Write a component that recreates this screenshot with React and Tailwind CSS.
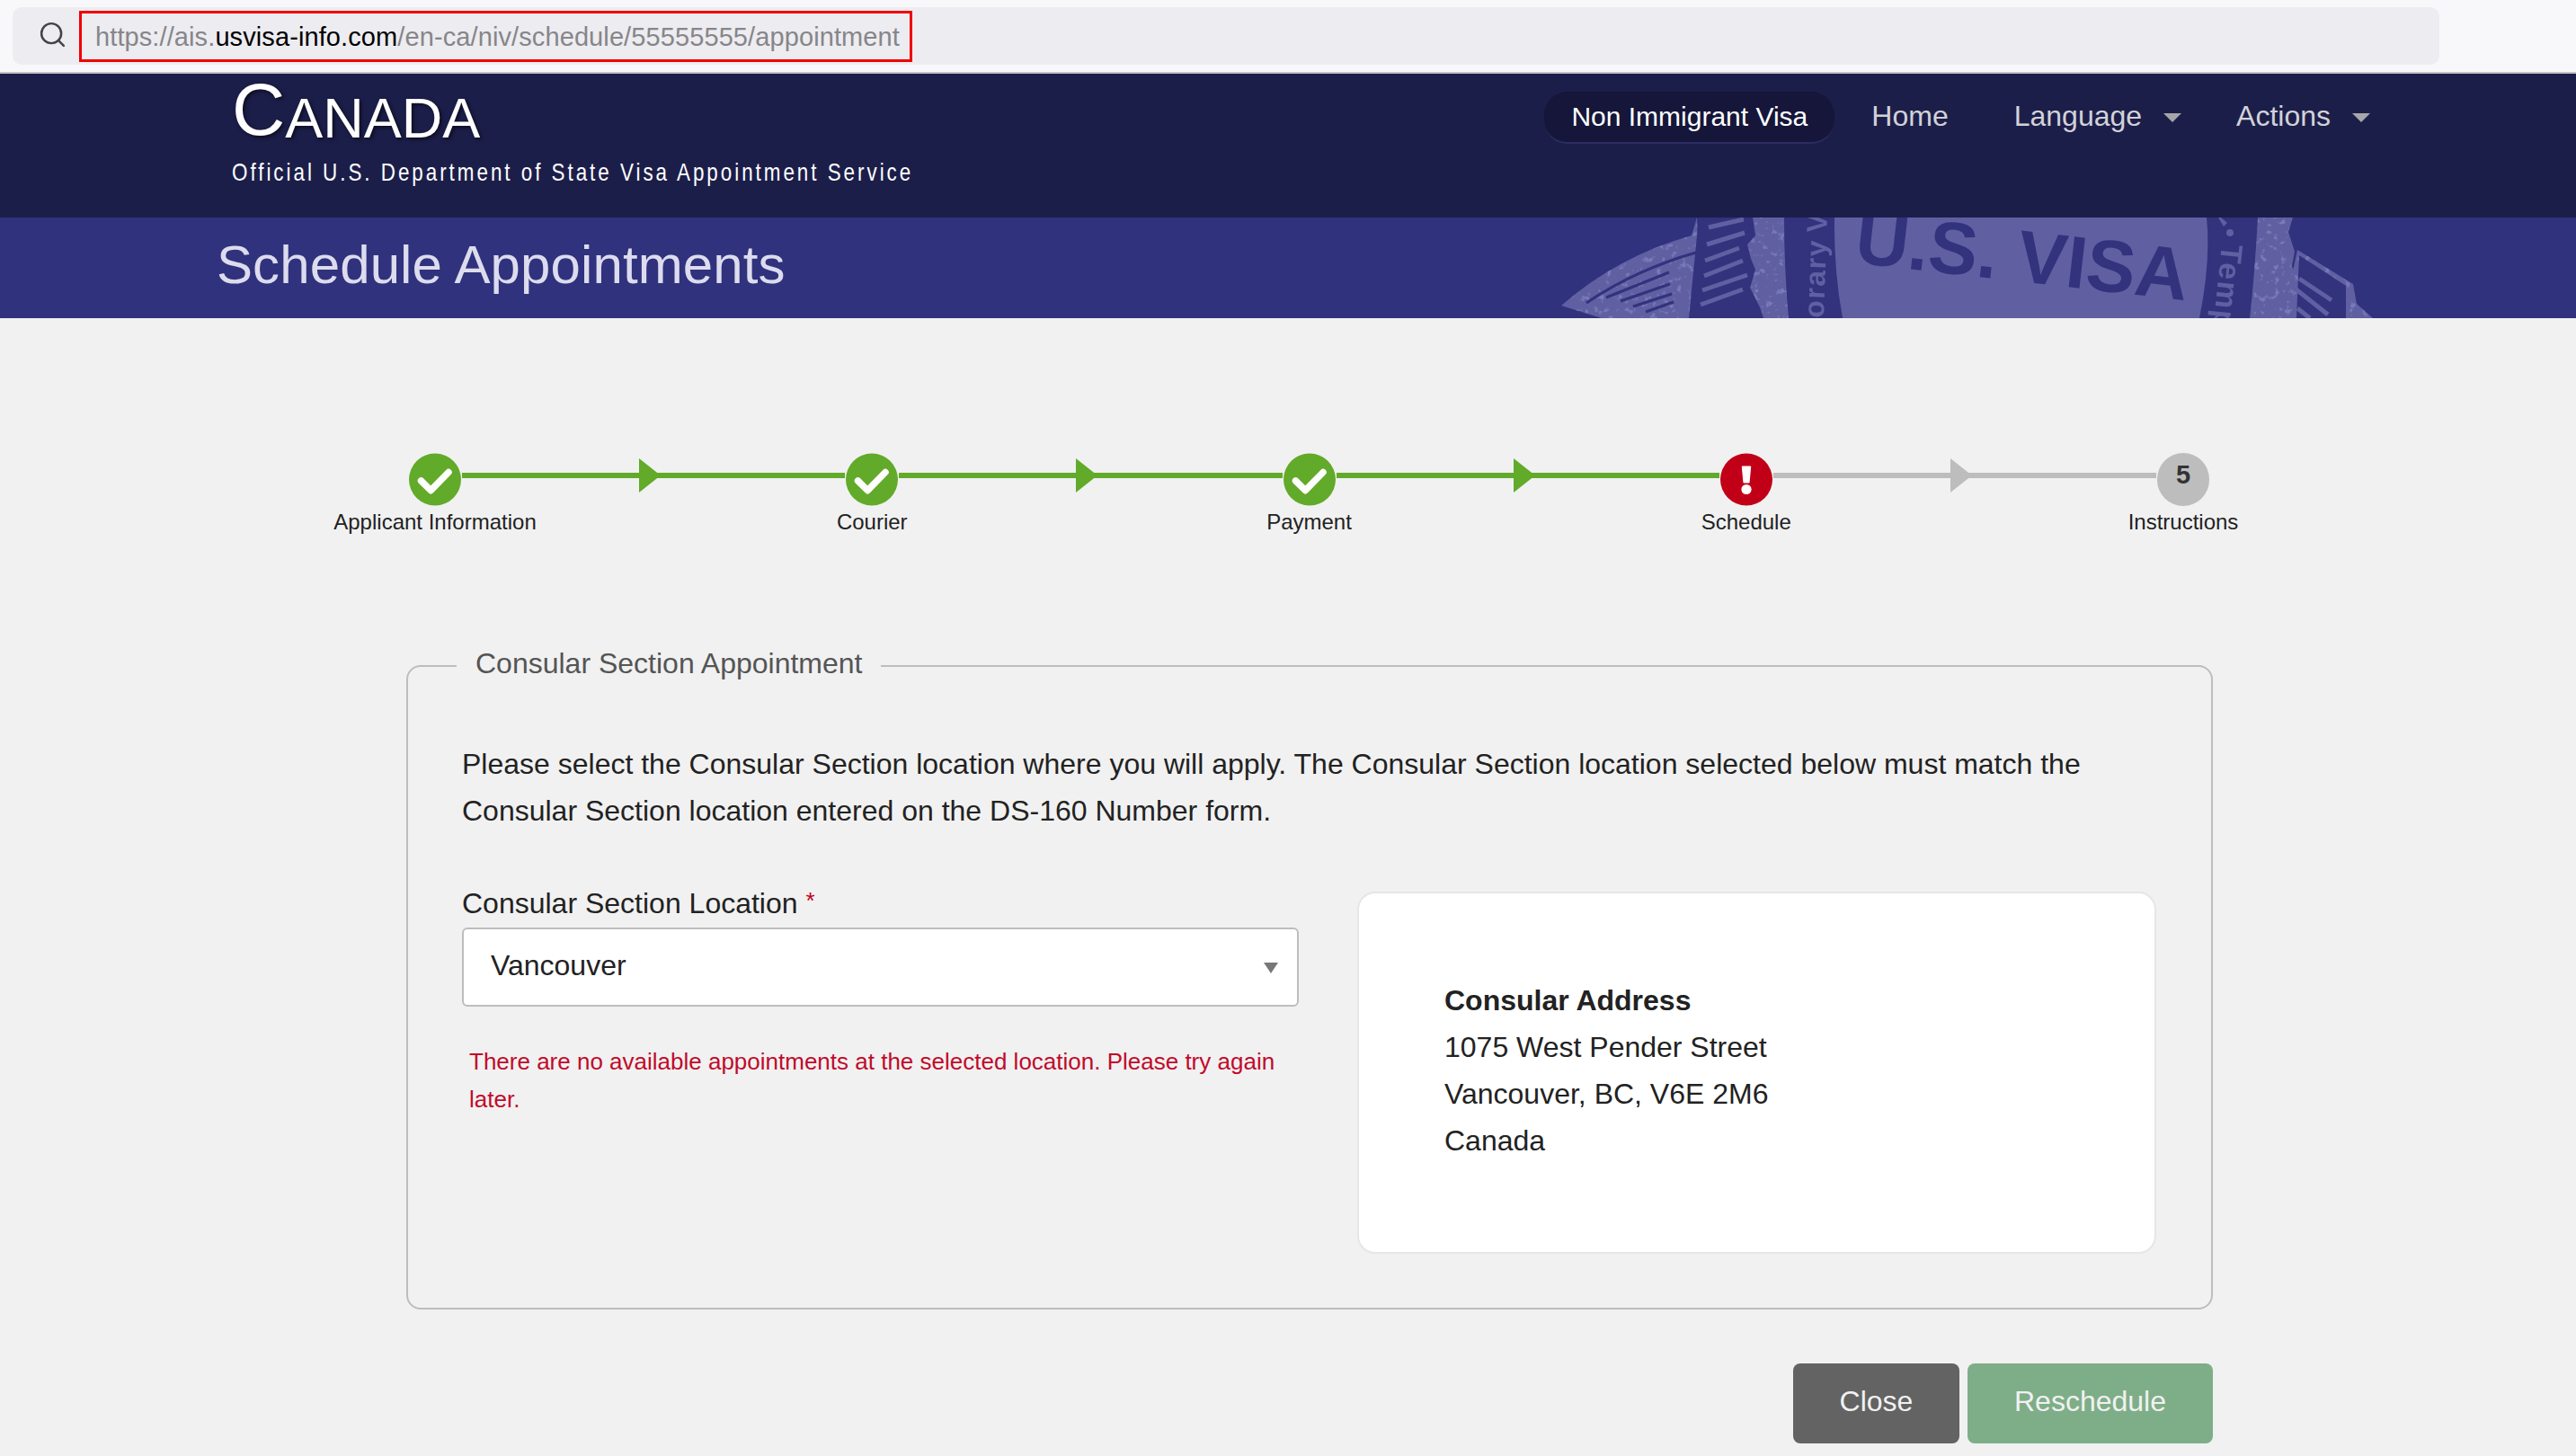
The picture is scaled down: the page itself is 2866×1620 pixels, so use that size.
import { Search } from 'lucide-react'

const steps = [
  { label: 'Applicant Information', state: 'done' },
  { label: 'Courier', state: 'done' },
  { label: 'Payment', state: 'done' },
  { label: 'Schedule', state: 'error' },
  { label: 'Instructions', state: 'todo', num: 5 },
]

function StepCircle({ state, num }) {
  if (state === 'done') {
    return (
      <svg width="58" height="59" viewBox="0 0 58 59" className="block">
        <circle cx="29" cy="29.5" r="29" fill="#62aa29" />
        <path d="M13.5 31 24.3 41.7 44 21.5" fill="none" stroke="#fff" strokeWidth="7.5" strokeLinejoin="round" strokeLinecap="round" />
      </svg>
    )
  }
  if (state === 'error') {
    return (
      <svg width="58" height="59" viewBox="0 0 58 59" className="block">
        <circle cx="29" cy="29.5" r="29" fill="#c10018" />
        <path d="M23.8 15.5a1 1 0 0 1 1-1h8.4a1 1 0 0 1 1 1l-1.6 17a1 1 0 0 1-1 1h-5.2a1 1 0 0 1-1-1z" fill="#fff" />
        <circle cx="29" cy="40.5" r="5.6" fill="#fff" />
      </svg>
    )
  }
  return (
    <div className="w-[58px] h-[59px] rounded-full bg-[#bdbdbd] flex justify-center pt-[7px] text-[29px] leading-[34px] font-bold text-[#333]">
      {num}
    </div>
  )
}

function Connector({ color }) {
  return (
    <div className={`relative flex-1 h-[6px] mt-[22px] mx-px ${color === 'green' ? 'bg-[#62aa29]' : 'bg-[#bdbdbd]'}`}>
      <div
        className={`absolute left-[197px] top-[-16px] w-0 h-0 border-y-[19.5px] border-y-transparent border-l-[24px] ${color === 'green' ? 'border-l-[#62aa29]' : 'border-l-[#bdbdbd]'}`}
      />
    </div>
  )
}

// the faded visa stamp behind the page title
function Seal() {
  const light = '#5e5fa2'
  const dark = '#30327d'
  return (
    <svg className="absolute left-[1720px] top-0" width="960" height="112" viewBox="1720 242 960 112">
      <defs>
        <filter id="mottle" x="0" y="0" width="100%" height="100%">
          <feTurbulence type="fractalNoise" baseFrequency="0.14" numOctaves="3" seed="4" result="n" />
          <feColorMatrix in="n" type="matrix" values="0 0 0 0 0.19  0 0 0 0 0.2  0 0 0 0 0.49  0 0 0 -6 2.5" />
          <feComposite in2="SourceGraphic" operator="in" result="specks" />
          <feMerge>
            <feMergeNode in="SourceGraphic" />
            <feMergeNode in="specks" />
          </feMerge>
        </filter>
        <filter id="soft"><feGaussianBlur stdDeviation="0.5" /></filter>
      </defs>
      <g filter="url(#soft)">
        {/* left fan */}
        <path d="M1737 340 Q1800 285 1882 262 L1888 242 L1892 354 L1782 354 Z" fill={light} filter="url(#mottle)" />
        <path d="M1765 337 Q1820 300 1887 281" fill="none" stroke={dark} strokeWidth="3" />
        <path d="M1787 331 1857 303M1803 335 1858 316M1817 341 1860 327M1831 347 1862 336" stroke={dark} strokeWidth="3" />
        {/* right fan */}
        <path d="M2556 278 L2618 316 L2622 338 L2640 354 L2540 354 Z" fill={light} filter="url(#mottle)" />
        <path d="M2558 284 L2610 318 L2610 354 L2555 354 Z" fill={dark} />
        <path d="M2558 310 2594 334M2552 320 2590 350M2556 343 2570 354" stroke={light} strokeWidth="5" />
        {/* dark band under the scalloped edge */}
        <path d="M1890 242 L1950 242 L1953 262 L1944 272 L1948 288 L1953 300 L1947 320 L1958 342 L1962 354 L1879 354 Z" fill={dark} />
        <path d="M1901 253 1940 244M1899 272 1941 259M1897 290 1935 276M1896 307 1939 290M1894 323 1944 306M1892 339 1939 322" stroke={light} strokeWidth="5" />
        {/* mottled disc */}
        <path
          d="M1950 242 L2551 242 L2546 258 L2553 280 L2550 296 L2556 310 L2548 326 L2552 340 L2548 354 L1962 354 L1958 342 L1947 320 L1953 300 L1948 288 L1944 272 L1953 262 Z"
          fill={light}
          filter="url(#mottle)"
        />
        {/* ring */}
        <path d="M1985 242 L2512 242 Q2508 310 2503 354 L1990 354 Q1985 300 1985 242 Z" fill={dark} />
        <path d="M2041 242 L2455 242 Q2460 290 2447 354 L2050 354 Q2040 300 2041 242 Z" fill={light} />
        <text transform="translate(2029 354) rotate(-88)" fontFamily="Liberation Sans, sans-serif" fontWeight="700" fontSize="32" letterSpacing="1.5" wordSpacing="-3" fill={light}>orary V</text>
        <text transform="translate(2472 271) rotate(96)" fontFamily="Liberation Sans, sans-serif" fontWeight="700" fontSize="34" letterSpacing="2" fill={light}>Temp</text>
        <circle cx="2481" cy="259" r="4" fill={light} />
        <path d="M2471 242 L2478 248 L2474 252 L2468 242 Z" fill={light} />
        <text transform="translate(2062 292) rotate(6.5)" fontFamily="Liberation Sans, sans-serif" fontWeight="700" fontSize="82" textLength="372" fill={dark}>U.S. VISA</text>
      </g>
    </svg>
  )
}

export default function App() {
  return (
    <div className="w-[2866px] h-[1620px] overflow-hidden bg-[#f1f1f1] font-['Liberation_Sans',Arial,sans-serif] text-[#222]">
      {/* browser url bar */}
      <div className="h-[82px] bg-[#f8f8fa] border-b-2 border-[#c3c3c6] pt-[8px] pl-[14px] pr-[152px]">
        <div className="h-[64px] rounded-[10px] bg-[#edecf0] flex items-center pl-[28px]">
          <Search size={33} strokeWidth={1.8} color="#444" className="shrink-0 mb-[3px]" />
          <div className="ml-[13px] h-[57px] w-[927px] border-[3px] border-[#f00000] flex items-center pl-[15px] pt-[3px] text-[29px] tracking-[0.1px] text-[#86868a] whitespace-nowrap">
            https://ais.<span className="text-black">usvisa-info.com</span>/en-ca/niv/schedule/55555555/appointment
          </div>
        </div>
      </div>

      {/* site header */}
      <header className="h-[160px] bg-[#1c1e4a] flex justify-between pl-[258px] pr-[229px]">
        <div>
          <div className="h-[85px] flex items-end text-white leading-none [text-shadow:2px_2px_4px_#0009] pb-[4px]">
            <span className="text-[82px]">C</span>
            <span className="text-[63px]">ANADA</span>
          </div>
          <div className="mt-[8px] w-[800px] origin-left scale-x-[.8] text-[28px] leading-[34px] text-white tracking-[3.72px] whitespace-nowrap">
            Official U.S. Department of State Visa Appointment Service
          </div>
        </div>
        <nav className="flex items-start pt-[20px] text-[32px] text-[#d2d2d8]">
          <div className="h-[58px] w-[323px] rounded-[26px] bg-[#15163a] border-b-2 border-[#2c2c62] flex items-center justify-center pb-[2px] text-white text-[30px]">
            Non Immigrant Visa
          </div>
          <div className="ml-[41px] h-[58px] flex items-center pb-[4px]">Home</div>
          <div className="ml-[73px] h-[58px] flex items-center pb-[4px]">
            Language
            <span className="ml-[24px] mt-[3px] w-0 h-0 border-x-[10px] border-x-transparent border-t-[10px] border-t-[#a6a6a9]" />
          </div>
          <div className="ml-[61px] h-[58px] flex items-center pb-[4px]">
            Actions
            <span className="ml-[24px] mt-[3px] w-0 h-0 border-x-[10px] border-x-transparent border-t-[10px] border-t-[#a6a6a9]" />
          </div>
        </nav>
      </header>

      {/* title band */}
      <div className="relative h-[112px] bg-[#30327d] overflow-hidden pl-[241px] pb-[6px] flex items-center">
        <Seal />
        <h1 className="relative text-[60px] leading-none tracking-[0.1px] text-[#dcdcee]">Schedule Appointments</h1>
      </div>

      {/* stepper */}
      <div className="mt-[150px] flex pl-[455px] pr-[408px]">
        {steps.map((step, i) => (
          <div key={step.label} className={`flex ${i < 4 ? 'flex-1' : ''}`}>
            <div className="relative w-[58px]">
              <StepCircle state={step.state} num={step.num} />
              <div className="absolute left-1/2 top-[62px] -translate-x-1/2 whitespace-nowrap text-[24px] leading-[30px] text-[#222]">
                {step.label}
              </div>
            </div>
            {i < 4 && <Connector color={i < 3 ? 'green' : 'gray'} />}
          </div>
        ))}
      </div>

      {/* form section */}
      <div className="mt-[158px] ml-[452px] w-[2010px]">
        <fieldset className="h-[736px] border-2 border-[#bdbdbd] rounded-[16px] px-[60px]">
          <legend className="ml-[-6px] px-[21px] text-[32px] leading-[40px] text-[#555]">
            <span className="relative top-[-3px]">Consular Section Appointment</span>
          </legend>
          <p className="mt-[63px] text-[32px] leading-[52px] text-[#222]">
            Please select the Consular Section location where you will apply. The Consular Section location selected below must match the
            <br />
            Consular Section location entered on the DS-160 Number form.
          </p>
          <div className="mt-[57px] flex">
            <div className="w-[931px] shrink-0">
              <label className="block text-[32px] leading-[40px] text-[#222]">
                Consular Section Location <span className="relative top-[-5px] text-[26px] text-[#c10018]">*</span>
              </label>
              <div className="mt-[5px] h-[88px] bg-white border-2 border-[#bdbdbd] rounded-[6px] flex items-center justify-between pl-[30px] pr-[21px] pb-[4px]">
                <span className="text-[32px] text-[#222]">Vancouver</span>
                <span className="mt-[6px] w-0 h-0 border-x-[8px] border-x-transparent border-t-[12px] border-t-[#777]" />
              </div>
              <p className="mt-[40px] pl-[8px] text-[26px] leading-[42px] text-[#c10a2a]">
                There are no available appointments at the selected location. Please try again
                <br />
                later.
              </p>
            </div>
            <div className="ml-[65px] mt-[7px] w-[889px] h-[403px] shrink-0 bg-white border-2 border-[#e6e6e6] rounded-[20px] pl-[95px] pt-[93px] text-[32px] leading-[52px] text-[#222]">
              <div className="font-bold">Consular Address</div>
              <div>1075 West Pender Street</div>
              <div>Vancouver, BC, V6E 2M6</div>
              <div>Canada</div>
            </div>
          </div>
        </fieldset>

        <div className="mt-[60px] flex justify-end gap-[9px] text-[32px] text-[#f1f1f1]">
          <button className="w-[185px] h-[89px] rounded-[8px] bg-[#636363] pb-[6px]">Close</button>
          <button className="w-[273px] h-[89px] rounded-[8px] bg-[#7eae88] pb-[6px]">Reschedule</button>
        </div>
      </div>
    </div>
  )
}
